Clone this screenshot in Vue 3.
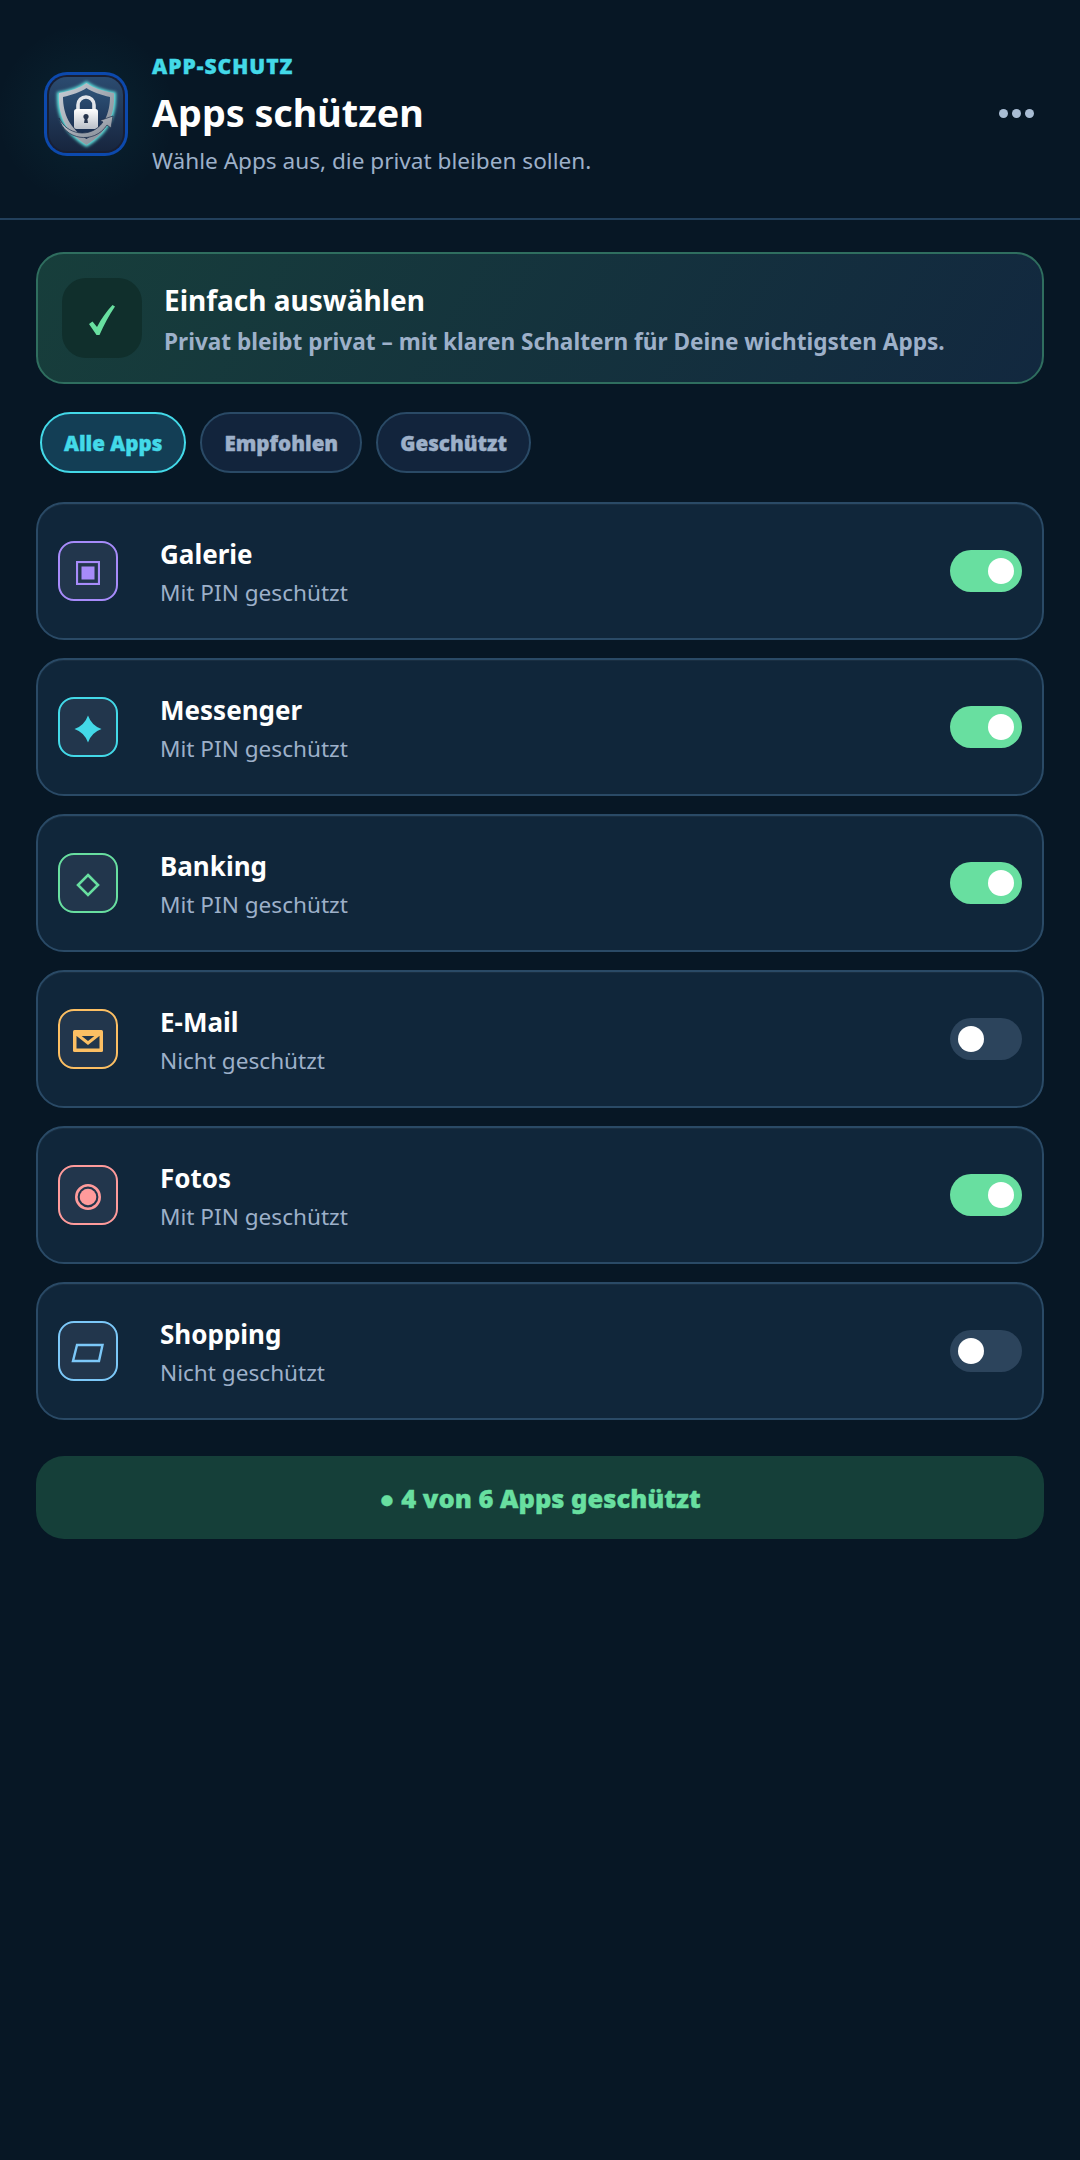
<template>
  <div class="page">
    <header class="header">
      <div class="logo">
        <svg viewBox="0 0 84 84" width="84" height="84">
          <defs>
            <linearGradient id="tileBg" x1="0" y1="0" x2="0" y2="1">
              <stop offset="0" stop-color="#2b4b70" />
              <stop offset="1" stop-color="#17253e" />
            </linearGradient>
            <linearGradient id="shieldBg" x1="0" y1="0" x2="0" y2="1">
              <stop offset="0" stop-color="#2f5378" />
              <stop offset="1" stop-color="#16294a" />
            </linearGradient>
            <linearGradient id="metal" x1="0" y1="0" x2="1" y2="1">
              <stop offset="0" stop-color="#c9ced6" />
              <stop offset="1" stop-color="#7f8690" />
            </linearGradient>
            <linearGradient id="lockBody" x1="0" y1="0" x2="0" y2="1">
              <stop offset="0" stop-color="#ffffff" />
              <stop offset="1" stop-color="#b9bfc8" />
            </linearGradient>
            <filter id="glow" x="-30%" y="-30%" width="160%" height="160%">
              <feGaussianBlur stdDeviation="1.8" />
            </filter>
          </defs>
          <rect x="0" y="0" width="84" height="84" rx="23" fill="#0c49ad" />
          <rect x="3" y="3" width="78" height="78" rx="20" fill="#191f33" />
          <rect x="5" y="5" width="74" height="74" rx="18" fill="url(#tileBg)" />
          <path d="M42.5 9 C49 14 59 18 72 20 C73 40 68 60 42.5 75 C17 60 12 40 13 20 C26 18 36 14 42.5 9 Z" fill="#5fe3de" filter="url(#glow)" />
          <path d="M42.5 11 C49 16 59 19 70 21 C71 40 66 59 42.5 73 C19 59 14 40 15 21 C26 19 36 16 42.5 11 Z" fill="url(#metal)" />
          <path d="M42.5 16 C48 20 57 23 66 25 C66 41 60 56 42.5 67 C25 56 19 41 19 25 C28 23 37 20 42.5 16 Z" fill="url(#shieldBg)" />
          <path d="M34 38 V33 A8 8 0 0 1 50 33 V38" fill="none" stroke="#e2e5ea" stroke-width="3.6" />
          <rect x="30" y="37" width="24" height="20" rx="2.5" fill="url(#lockBody)" />
          <circle cx="42" cy="44.5" r="2.6" fill="#26354d" />
          <path d="M41 45 H43 L44 51 H40 Z" fill="#26354d" />
          <path d="M15 46 C22 62 46 68 59 50 L56 48.5 L69 44 L67 56 L63 53 C50 73 20 68 15 46 Z" fill="url(#metal)" stroke="#1a2d4a" stroke-width="0.7" />
        </svg>
      </div>
      <div class="header-text">
        <div class="eyebrow">APP-SCHUTZ</div>
        <h1 class="title">Apps schützen</h1>
        <p class="subtitle">Wähle Apps aus, die privat bleiben sollen.</p>
      </div>
      <div class="more">
        <span></span><span></span><span></span>
      </div>
    </header>

    <main class="content">
      <section class="banner">
        <div class="banner-icon">
          <svg viewBox="0 0 26 30" width="26" height="30">
            <path d="M0 19 L3.5 16.5 L8 22 C12 14 18 6 23.5 0 L26 1.5 C20 10 15 20 10.5 30 L7.5 30 Z" fill="#68dfa0" />
          </svg>
        </div>
        <div class="banner-copy">
          <div class="banner-title">Einfach auswählen</div>
          <div class="banner-text">Privat bleibt privat – mit klaren Schaltern für Deine wichtigsten Apps.</div>
        </div>
      </section>

      <nav class="tabs">
        <button v-for="tab in tabs" :key="tab" class="tab" :class="{ active: tab === activeTab }" @click="activeTab = tab">
          {{ tab }}
        </button>
      </nav>

      <ul class="app-list">
        <li v-for="app in apps" :key="app.name" class="app-card">
          <div class="app-icon" :class="app.icon">
            <svg v-if="app.icon === 'galerie'" viewBox="0 0 24 24" width="24" height="24">
              <rect x="1" y="1" width="22" height="22" fill="none" stroke="#a78bfa" stroke-width="2.2" />
              <rect x="5.5" y="5.5" width="13" height="13" fill="#a78bfa" />
            </svg>
            <svg v-else-if="app.icon === 'messenger'" viewBox="0 0 28 28" width="28" height="28">
              <path d="M14 0.5 Q17.5 10.5 27.5 14 Q17.5 17.5 14 27.5 Q10.5 17.5 0.5 14 Q10.5 10.5 14 0.5 Z" fill="#43d9e8" />
            </svg>
            <svg v-else-if="app.icon === 'banking'" viewBox="0 0 24 24" width="24" height="24">
              <path d="M12 2 L22 12 L12 22 L2 12 Z" fill="none" stroke="#68dfa0" stroke-width="2.6" />
            </svg>
            <svg v-else-if="app.icon === 'email'" viewBox="0 0 30 22" width="30" height="22">
              <rect x="0" y="0" width="30" height="22" rx="1.5" fill="#fcbf63" />
              <rect x="3.5" y="6" width="23" height="12.5" fill="#22364c" />
              <path d="M3 3.5 L15 13 L27 3.5" fill="none" stroke="#fcbf63" stroke-width="3" />
            </svg>
            <svg v-else-if="app.icon === 'fotos'" viewBox="0 0 26 26" width="26" height="26">
              <circle cx="13" cy="13" r="11.7" fill="none" stroke="#ff9b9b" stroke-width="2.6" />
              <circle cx="13" cy="13" r="8.3" fill="#ff9b9b" />
            </svg>
            <svg v-else viewBox="0 0 34 20" width="34" height="20">
              <path d="M6 2 H31.5 L28 18 H2 Z" fill="none" stroke="#7cc8f8" stroke-width="2.4" />
            </svg>
          </div>
          <div class="app-text">
            <div class="app-name">{{ app.name }}</div>
            <div class="app-status">{{ app.on ? 'Mit PIN geschützt' : 'Nicht geschützt' }}</div>
          </div>
          <button class="toggle" :class="{ on: app.on }" @click="app.on = !app.on">
            <span class="knob"></span>
          </button>
        </li>
      </ul>

      <div class="summary">● {{ protectedCount }} von {{ apps.length }} Apps geschützt</div>
    </main>
  </div>
</template>

<script setup>
import { computed, reactive, ref } from 'vue'

const tabs = ['Alle Apps', 'Empfohlen', 'Geschützt']
const activeTab = ref('Alle Apps')

const apps = reactive([
  { name: 'Galerie', icon: 'galerie', on: true },
  { name: 'Messenger', icon: 'messenger', on: true },
  { name: 'Banking', icon: 'banking', on: true },
  { name: 'E-Mail', icon: 'email', on: false },
  { name: 'Fotos', icon: 'fotos', on: true },
  { name: 'Shopping', icon: 'shopping', on: false }
])

const protectedCount = computed(() => apps.filter((a) => a.on).length)
</script>

<style>
html,
body {
  background: #071725;
}
</style>

<style scoped>
.page {
  min-height: 2160px;
  background: #071725;
  font-family: "Noto Sans", "Open Sans", sans-serif;
  color: #fff;
}

.header {
  display: flex;
  align-items: center;
  height: 220px;
  box-sizing: border-box;
  padding: 9px 36px 0 44px;
  border-bottom: 2px solid #22405c;
  background: radial-gradient(circle at 86px 114px, rgba(40, 200, 210, 0.07), transparent 90px);
}

.logo {
  width: 84px;
  height: 84px;
  margin-right: 24px;
  flex-shrink: 0;
}

.logo svg {
  display: block;
}

.header-text {
  flex: 1;
}

.eyebrow {
  color: #43d9e8;
  font-size: 21px;
  font-weight: 900;
  letter-spacing: 1px;
  line-height: 28px;
  -webkit-text-stroke: 0.4px currentColor;
}

.title {
  margin: 8px 0;
  font-size: 37.7px;
  font-weight: 700;
  line-height: 50px;
}

.subtitle {
  margin: 0;
  color: #9db0c9;
  font-size: 22.6px;
  line-height: 30px;
}

.more {
  display: flex;
  gap: 4px;
  margin-right: 10px;
}

.more span {
  width: 9px;
  height: 9px;
  border-radius: 50%;
  background: #a9bdd4;
}

.content {
  padding: 32px 36px;
}

.banner {
  display: flex;
  align-items: center;
  gap: 22px;
  height: 132px;
  box-sizing: border-box;
  padding: 0 24px;
  border: 2px solid #2f6e5f;
  border-radius: 28px;
  background: linear-gradient(120deg, #173e3b, #12283f);
}

.banner-icon {
  display: flex;
  align-items: center;
  justify-content: center;
  width: 80px;
  height: 80px;
  border-radius: 24px;
  background: #102f2c;
  padding-top: 4px;
  box-sizing: border-box;
  flex-shrink: 0;
}

.banner-copy {
  padding-top: 2px;
}

.banner-title {
  font-size: 28px;
  font-weight: 700;
  line-height: 38px;
}

.banner-text {
  margin-top: 8px;
  color: #9db0c9;
  font-size: 22.6px;
  font-weight: 700;
  line-height: 30px;
}

.tabs {
  display: flex;
  gap: 14px;
  margin: 28px 0 29px 4px;
}

.tab {
  height: 61px;
  padding: 0 22px;
  border: 2px solid #2a4a66;
  border-radius: 31px;
  background: #12243c;
  color: #9db0c9;
  font-family: inherit;
  font-size: 20.6px;
  font-weight: 900;
  -webkit-text-stroke: 0.4px currentColor;
}

.tab.active {
  border-color: #43d9e8;
  background: #133e55;
  color: #43d9e8;
}

.app-list {
  display: flex;
  flex-direction: column;
  gap: 18px;
  margin: 0;
  padding: 0;
  list-style: none;
}

.app-card {
  display: flex;
  align-items: center;
  height: 138px;
  box-sizing: border-box;
  padding: 0 20px;
  border: 2px solid #2a4a66;
  border-radius: 28px;
  background: #10263a;
  box-shadow: inset 0 1px 0 rgba(255, 255, 255, 0.04);
}

.app-icon {
  display: flex;
  align-items: center;
  justify-content: center;
  width: 60px;
  height: 60px;
  box-sizing: border-box;
  padding-top: 3px;
  margin-right: 42px;
  border: 2px solid;
  border-radius: 16px;
  background: #22364c;
  flex-shrink: 0;
}

.app-icon.galerie { border-color: #a78bfa; }
.app-icon.messenger { border-color: #43d9e8; }
.app-icon.banking { border-color: #68dfa0; }
.app-icon.email { border-color: #fcbf63; }
.app-icon.fotos { border-color: #ff9b9b; }
.app-icon.shopping { border-color: #7cc8f8; }

.app-text {
  flex: 1;
  padding-top: 2px;
}

.app-name {
  font-size: 26px;
  font-weight: 700;
  line-height: 36px;
}

.app-status {
  margin-top: 6px;
  color: #9db0c9;
  font-size: 22.6px;
  line-height: 30px;
}

.toggle {
  position: relative;
  width: 72px;
  height: 42px;
  padding: 0;
  border: 0;
  border-radius: 21px;
  background: #2c445c;
}

.toggle.on {
  background: #68dfa0;
}

.knob {
  position: absolute;
  top: 8px;
  left: 8px;
  width: 26px;
  height: 26px;
  border-radius: 50%;
  background: #fff;
}

.toggle.on .knob {
  left: 38px;
}

.summary {
  display: flex;
  align-items: center;
  justify-content: center;
  height: 83px;
  margin-top: 36px;
  border-radius: 28px;
  background: #153f39;
  color: #68dfa0;
  font-size: 25.5px;
  font-weight: 900;
  -webkit-text-stroke: 0.4px currentColor;
}
</style>
